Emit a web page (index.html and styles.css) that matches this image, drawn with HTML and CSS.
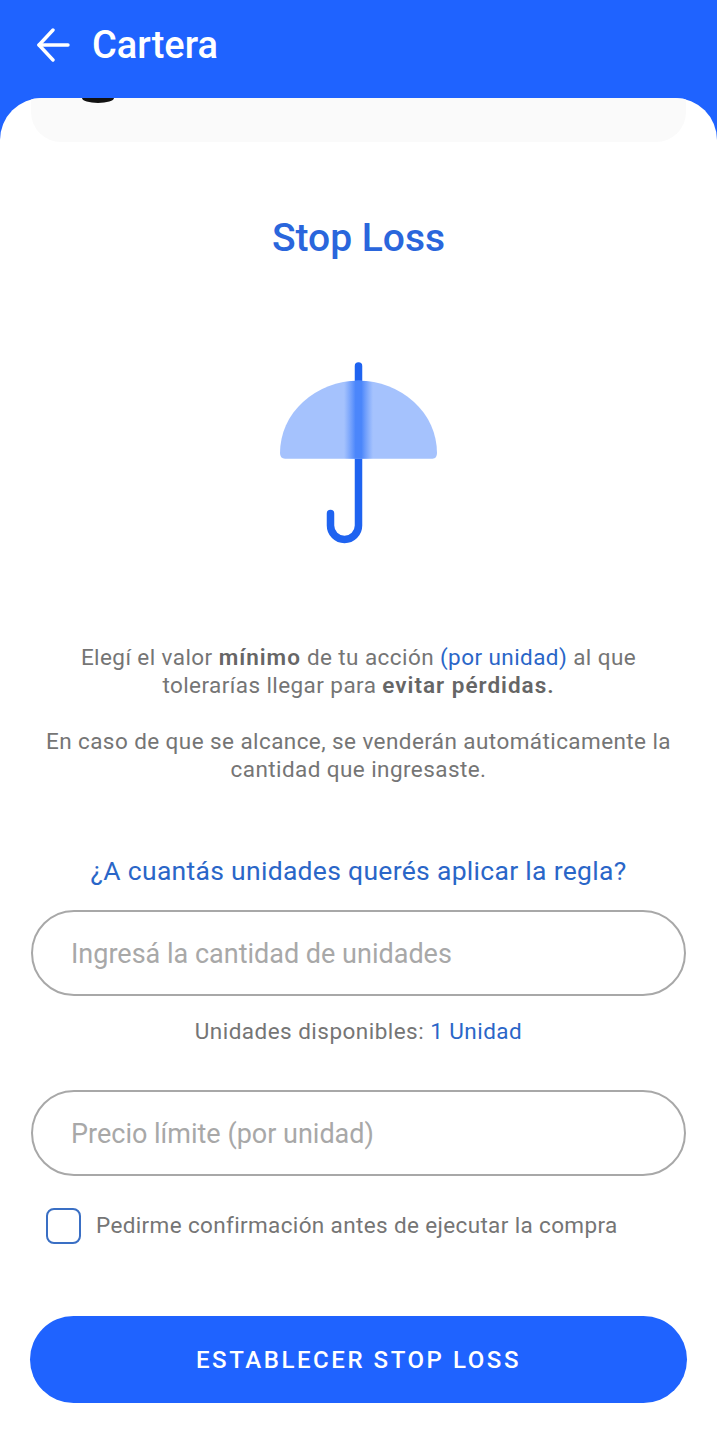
FILE: index.html
```html
<!DOCTYPE html>
<html lang="es">
<head>
    <meta charset="UTF-8">
    <meta name="viewport" content="width=device-width, initial-scale=1.0">
    <title>Stop Loss</title>
    <link rel="stylesheet" href="styles.css">
</head>
<body>

<header class="topbar">
    <svg class="back-icon" width="34" height="34" viewBox="0 0 34 34" fill="none" stroke="#fff" stroke-width="3.4" stroke-linecap="round" stroke-linejoin="round">
        <path d="M32 17H3"/>
        <path d="M17 2L3 17l14 15"/>
    </svg>
    <span class="topbar-title">Cartera</span>
</header>

<main class="sheet">
    <div class="prev-card"><span class="prev-avatar"></span></div>

    <h1 class="title">Stop Loss</h1>

    <svg class="umbrella" width="160" height="184" viewBox="0 0 160 184" fill="none">
        <defs>
            <linearGradient id="band" x1="0" y1="0" x2="1" y2="0">
                <stop offset="0" stop-color="#5a90fb" stop-opacity="0"/>
                <stop offset="0.4" stop-color="#4b86fb"/>
                <stop offset="0.6" stop-color="#4b86fb"/>
                <stop offset="1" stop-color="#5a90fb" stop-opacity="0"/>
            </linearGradient>
            <clipPath id="canopyClip">
                <path d="M6 96.700Q1 96.700 1 91A78.500 72.300 0 0 1 158 91Q158 96.700 153.500 96.700Z"/>
            </clipPath>
        </defs>
        <path d="M79.500 4V163.500a14 14 0 0 1-28 0v-12" stroke="#1f63f0" stroke-width="7.500" stroke-linecap="round"/>
        <path d="M6 96.700Q1 96.700 1 91A78.500 72.300 0 0 1 158 91Q158 96.700 153.500 96.700Z" fill="#a5c2fd"/>
        <rect x="65" y="16" width="29" height="84" fill="url(#band)" clip-path="url(#canopyClip)"/>
    </svg>

    <div class="info">
        <p>Elegí el valor <b>mínimo</b> de tu acción <span class="blue">(por unidad)</span> al que<br>tolerarías llegar para <b>evitar pérdidas.</b></p>
        <p>En caso de que se alcance, se venderán automáticamente la<br>cantidad que ingresaste.</p>
    </div>

    <h2 class="question">¿A cuantás unidades querés aplicar la regla?</h2>

    <input class="field" type="text" placeholder="Ingresá la cantidad de unidades">
    <div class="available">Unidades disponibles: <span class="blue">1 Unidad</span></div>
    <input class="field" type="text" placeholder="Precio límite (por unidad)">

    <label class="confirm">
        <span class="checkbox"></span>
        <span class="confirm-text">Pedirme confirmación antes de ejecutar la compra</span>
    </label>

    <button class="submit" type="button">ESTABLECER STOP LOSS</button>
</main>

</body>
</html>
```

FILE: styles.css
```css
* { margin: 0; padding: 0; box-sizing: border-box; }
html, body { height: 100%; }
body { font-family: 'Roboto', sans-serif; background: #1f63ff; color: #757575; overflow: hidden; }

.topbar { height: 98px; display: flex; align-items: center; padding: 0 0 8px 36px; color: #fff; }
.back-icon { margin-right: 22px; }
.topbar-title { font-size: 38px; font-weight: 500; }

.sheet {
    height: 1358px; background: #fff; border-radius: 42px 42px 0 0;
    padding: 0 31px; display: flex; flex-direction: column; overflow: hidden;
}
.prev-card {
    height: 44px; flex: none; background: #fafafa; border-radius: 0 0 30px 30px;
    padding-left: 51px;
}
.prev-avatar {
    display: block; width: 32px; height: 5px; background: #111;
    border-radius: 0 0 50% 50% / 0 0 100% 100%;
}

.title { margin-top: 74px; font-size: 39px; line-height: 44px; font-weight: 500; color: #2a66dc; text-align: center; }

.umbrella { display: block; margin: 102px auto 0; flex: none; }

.info { margin-top: 97px; text-align: center; font-size: 22.500px; line-height: 28px; letter-spacing: .42px; }
.info p + p { margin-top: 28px; }
.info b { font-weight: 600; color: #666; letter-spacing: 1px; }
.blue { color: #2a66c8; }

.question { margin-top: 72px; font-size: 26.500px; line-height: 32px; font-weight: 400; letter-spacing: .3px; color: #2a66c8; text-align: center; }

.field {
    flex: none; width: 100%; height: 86px; border: 2px solid #a8a8a8; border-radius: 43px;
    padding: 2px 38px 0; font-family: inherit; font-size: 27px; color: #333; background: #fff; outline: none;
}
.question + .field { margin-top: 23px; }
.field::placeholder { color: #a8a8a8; opacity: 1; }

.available { margin: 21px 0 45px; text-align: center; font-size: 22.500px; line-height: 28px; letter-spacing: .47px; }

.confirm { display: flex; align-items: center; margin: 32px 0 0 15px; font-size: 22.500px; line-height: 34px; letter-spacing: .36px; }
.checkbox { width: 35px; height: 36px; border: 2px solid #3a6fc4; border-radius: 8px; margin-right: 15px; flex: none; }
.confirm-text { padding-bottom: 2px; }

.submit {
    flex: none; height: 87px; margin: 72px -1px 0; border: none; border-radius: 44px;
    background: #1f63ff; color: #fff; font-family: inherit; font-size: 24px; font-weight: 500; letter-spacing: 2.550px;
}
```
